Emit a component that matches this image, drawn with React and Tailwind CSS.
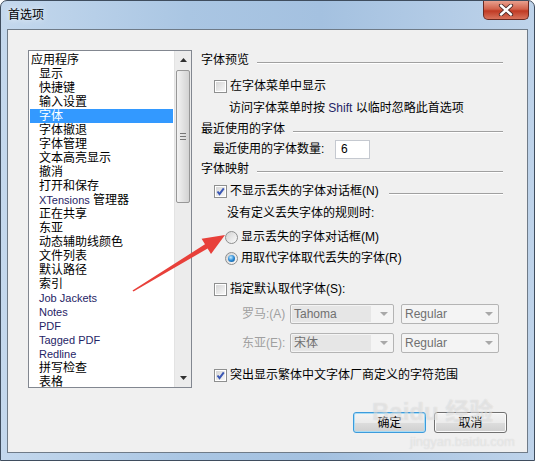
import React from "react";

const items = [
  { t: "应用程序", top: true },
  { t: "显示" },
  { t: "快捷键" },
  { t: "输入设置" },
  { t: "字体", sel: true },
  { t: "字体撤退" },
  { t: "字体管理" },
  { t: "文本高亮显示" },
  { t: "撤消" },
  { t: "打开和保存" },
  { t: "XTensions", cn: " 管理器", en: true },
  { t: "正在共享" },
  { t: "东亚" },
  { t: "动态辅助线颜色" },
  { t: "文件列表" },
  { t: "默认路径" },
  { t: "索引" },
  { t: "Job Jackets", en: true },
  { t: "Notes", en: true },
  { t: "PDF", en: true },
  { t: "Tagged PDF", en: true },
  { t: "Redline", en: true },
  { t: "拼写检查" },
  { t: "表格" },
];

const Checkbox = ({ checked }) => (
  <span className="w-[13px] h-[13px] shrink-0 border border-[#8e8f8f] bg-white flex items-center justify-center">
    <span className="w-[11px] h-[11px] border border-white bg-[linear-gradient(135deg,#d6d6d6,#f7f7f7)] flex items-center justify-center">
      {checked && (
        <svg width="9" height="9" viewBox="0 0 9 9">
          <path d="M1.5 4.5 L3.5 7 L7.8 1.3" fill="none" stroke="#3a57b5" strokeWidth="2" />
        </svg>
      )}
    </span>
  </span>
);

const Radio = ({ checked }) => (
  <span className="w-[13px] h-[13px] shrink-0 rounded-full border border-[#8e8f8f] bg-[linear-gradient(135deg,#d2d2d2,#fbfbfb)] flex items-center justify-center">
    {checked && (
      <span className="w-[7px] h-[7px] rounded-full bg-[radial-gradient(circle_at_40%_35%,#c6ecff_0%,#2a8ad6_50%,#0b4a86_100%)]" />
    )}
  </span>
);

const Header = ({ children, mt }) => (
  <div className={`h-[20px] flex items-center pl-[4px] ${mt}`}>
    <span className="whitespace-nowrap">{children}</span>
    <div className="flex-1 ml-[8px] mt-[6px] border-t border-[#a0a0a0] border-b border-b-white" />
  </div>
);

const Combo = ({ text, w, shade }) => (
  <div className={`${w} h-[20px] border border-[#b4b4b4] rounded-[2px] bg-[#f4f4f4] flex items-center p-[1px]`}>
    <div className={`flex-1 h-full flex items-center pl-[2px] text-[12px] text-[#707070] ${shade ? "bg-[#e6e6e6] mr-[5px]" : ""}`}>
      {text}
    </div>
    <svg width="16" height="18" viewBox="0 0 16 18" className="shrink-0">
      <path d="M4 7 L12 7 L8 11 Z" fill="#a8a8a8" />
    </svg>
  </div>
);

export default function App() {
  return (
    <div className="relative w-[535px] h-[461px] bg-white overflow-hidden [font-family:'Liberation_Sans','Noto_Sans_CJK_SC',sans-serif] text-[12px] text-black">
      <div className="w-[535px] h-[461px] border border-[#3f4d5e] rounded-t-[7px] flex flex-col bg-[linear-gradient(90deg,#c4d8ed_0%,#aac6e3_35%,#a4c1e0_60%,#bed3ea_100%)]">
        <div className="h-[28px] flex items-start justify-between">
          <div className="pl-[7px] h-[28px] flex items-center [text-shadow:0_0_6px_#ffffff]">首选项</div>
          <div className="mr-[5px] w-[46px] h-[19px] border border-t-0 border-[#6a2a22] rounded-b-[5px] bg-[linear-gradient(180deg,#e9a08e_0%,#d2624b_45%,#c03a24_55%,#d8735c_100%)] flex items-center justify-center">
            <svg width="16" height="12" viewBox="0 0 16 12">
              <path d="M3 1.5 L13 10.5 M13 1.5 L3 10.5" stroke="#4a2a28" strokeWidth="4.2" strokeLinecap="round" />
              <path d="M3 1.5 L13 10.5 M13 1.5 L3 10.5" stroke="#ffffff" strokeWidth="2.4" strokeLinecap="round" />
            </svg>
          </div>
        </div>

        <div className="ml-[6px] w-[521px] h-[424px] border border-[#6f7b88] bg-[#f0f0f0] pt-[20px] pl-[20px] flex flex-col">
          <div className="flex items-start">
            <div className="w-[164px] h-[338px] border border-[#828790] bg-white flex">
              <div className="flex-1 pt-[2px] px-[1px] overflow-hidden">
                {items.map((it, i) => (
                  <div
                    key={i}
                    className={`h-[14px] leading-[14px] whitespace-nowrap ${it.top ? "pl-[1px]" : "pl-[9px]"} ${it.sel ? "bg-[#3399ff] text-white" : ""}`}
                  >
                    {it.en ? (
                      <>
                        <span className={`text-[11px] ${it.sel ? "" : "text-[#1f2466]"}`}>{it.t}</span>
                        {it.cn}
                      </>
                    ) : (
                      it.t
                    )}
                  </div>
                ))}
              </div>
              <div className="w-[17px] h-full bg-[#ececec] border-l border-[#e3e3e3] flex flex-col items-center">
                <div className="h-[18px] w-full flex items-center justify-center">
                  <svg width="7" height="4" viewBox="0 0 7 4"><path d="M0 4 L3.5 0 L7 4 Z" fill="#303030" /></svg>
                </div>
                <div className="mt-[1px] w-[14px] h-[133px] rounded-[2px] border border-[#979797] bg-[linear-gradient(90deg,#f3f3f3,#e2e2e2_50%,#d3d3d3)] flex flex-col items-center justify-center gap-[2px]">
                  <div className="w-[6px] border-t border-[#777]" />
                  <div className="w-[6px] border-t border-[#777]" />
                  <div className="w-[6px] border-t border-[#777]" />
                </div>
                <div className="flex-1" />
                <div className="h-[18px] w-full flex items-center justify-center">
                  <svg width="7" height="4" viewBox="0 0 7 4"><path d="M0 0 L7 0 L3.5 4 Z" fill="#303030" /></svg>
                </div>
              </div>
            </div>

            <div className="ml-[5px] w-[306px] flex flex-col">
              <Header mt="">字体预览</Header>
              <div className="mt-[6px] h-[20px] flex items-center pl-[17px]">
                <Checkbox />
                <span className="ml-[3px]">在字体菜单中显示</span>
              </div>
              <div className="mt-[2px] h-[20px] flex items-center pl-[32px] whitespace-nowrap">
                访问字体菜单时按 <span className="text-[#1f2466]">&nbsp;Shift&nbsp;</span> 以临时忽略此首选项
              </div>
              <Header mt="mt-[1px]">最近使用的字体</Header>
              <div className="h-[20px] flex items-center pl-[16px]">
                <span className="w-[122px] whitespace-nowrap">最近使用的字体数量:</span>
                <div className="w-[35px] h-[19px] border border-[#c5c9d0] bg-white flex items-center pl-[5px] text-[12px]">6</div>
              </div>
              <Header mt="">字体映射</Header>
              <div className="mt-[2px] h-[20px] flex items-center pl-[17px]">
                <Checkbox checked />
                <span className="ml-[3px] whitespace-nowrap">不显示丢失的字体对话框(N)</span>
                <div className="flex-1 ml-[10px] mt-[6px] border-t border-[#a0a0a0] border-b border-b-white" />
              </div>
              <div className="mt-[2px] h-[20px] flex items-center pl-[30px]">没有定义丢失字体的规则时:</div>
              <div className="mt-[4px] h-[20px] flex items-center pl-[28px]">
                <Radio />
                <span className="ml-[3px]">显示丢失的字体对话框(M)</span>
              </div>
              <div className="mt-[1px] h-[20px] flex items-center pl-[28px]">
                <Radio checked />
                <span className="ml-[3px]">用取代字体取代丢失的字体(R)</span>
              </div>
              <div className="mt-[11px] h-[20px] flex items-center pl-[17px]">
                <Checkbox />
                <span className="ml-[3px]">指定默认取代字体(S):</span>
              </div>
              <div className="mt-[5px] h-[20px] flex items-center pl-[45px]">
                <span className="w-[48px] text-[#a0a0a0] whitespace-nowrap">罗马:(A)</span>
                <Combo text="Tahoma" w="w-[104px]" shade />
                <div className="ml-[7px]"><Combo text="Regular" w="w-[98px]" /></div>
              </div>
              <div className="mt-[9px] h-[20px] flex items-center pl-[45px]">
                <span className="w-[48px] text-[#a0a0a0] whitespace-nowrap">东亚(E):</span>
                <Combo text="宋体" w="w-[104px]" shade />
                <div className="ml-[7px]"><Combo text="Regular" w="w-[98px]" /></div>
              </div>
              <div className="mt-[12px] h-[20px] flex items-center pl-[17px]">
                <Checkbox checked />
                <span className="ml-[3px] whitespace-nowrap">突出显示繁体中文字体厂商定义的字符范围</span>
              </div>
            </div>
          </div>

          <div className="mt-[24px] pr-[20px] flex justify-end gap-[8px]">
            <button className="w-[73px] h-[21px] rounded-[3px] border border-[#3c9bdc] shadow-[inset_0_0_0_1px_#a8dcf5] bg-[linear-gradient(180deg,#f4f4f4_0%,#ebebeb_50%,#dddddd_51%,#cfcfcf_100%)] text-[12px]">
              确定
            </button>
            <button className="w-[73px] h-[21px] rounded-[3px] border border-[#707070] shadow-[inset_0_0_0_1px_#fbfbfb] bg-[linear-gradient(180deg,#f4f4f4_0%,#ebebeb_50%,#dddddd_51%,#cfcfcf_100%)] text-[12px]">
              取消
            </button>
          </div>
        </div>
      </div>

      <div className="absolute left-[372px] top-[394px] text-[24px] font-bold text-white/40 [text-shadow:0_0_1px_rgba(150,150,150,0.35)] pointer-events-none whitespace-nowrap">
        Baidu 经验
      </div>
      <div className="absolute left-[410px] top-[432px] text-[13px] text-white/40 [text-shadow:0_0_1px_rgba(150,150,150,0.35)] pointer-events-none whitespace-nowrap">
        jingyan.baidu.com
      </div>

      <svg className="absolute left-0 top-0 pointer-events-none" width="535" height="461" viewBox="0 0 535 461">
        <polygon
          points="132.5,290.4 205,244.3 201.6,238.7 225,235 211,254 207.6,248.5 133.5,291.6"
          fill="#e8403a"
        />
      </svg>
    </div>
  );
}
